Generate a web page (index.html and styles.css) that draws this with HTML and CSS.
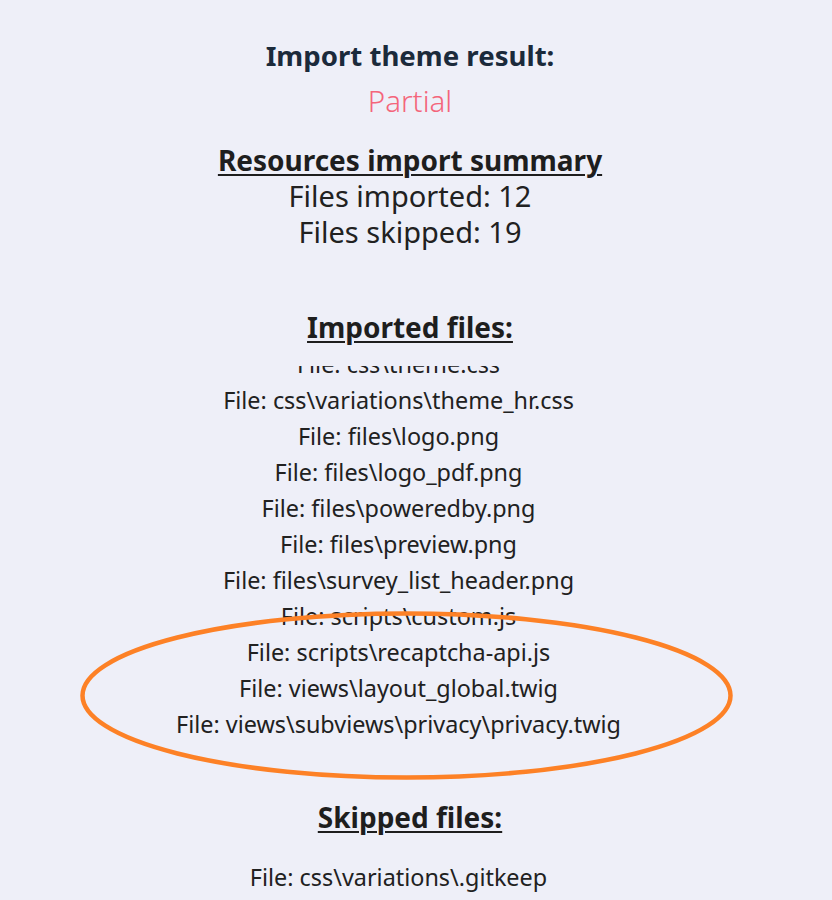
FILE: index.html
```html
<!DOCTYPE html>
<html lang="en">
<head>
<meta charset="utf-8">
<title>Import theme result</title>
<link rel="stylesheet" href="styles.css">
</head>
<body>
<main class="page">
  <h2 class="result-title">Import theme result:</h2>
  <p class="result-status">Partial</p>

  <h3 class="section-title">Resources import summary</h3>
  <p class="summary-line">Files imported: 12</p>
  <p class="summary-line">Files skipped: 19</p>

  <h3 class="section-title imported-title">Imported files:</h3>
  <div class="file-scroll">
    <ul class="file-list scrolled">
      <li>File: css\theme.css</li>
      <li>File: css\variations\theme_hr.css</li>
      <li>File: files\logo.png</li>
      <li>File: files\logo_pdf.png</li>
      <li>File: files\poweredby.png</li>
      <li>File: files\preview.png</li>
      <li>File: files\survey_list_header.png</li>
      <li>File: scripts\custom.js</li>
      <li>File: scripts\recaptcha-api.js</li>
      <li>File: views\layout_global.twig</li>
      <li>File: views\subviews\privacy\privacy.twig</li>
    </ul>
  </div>

  <h3 class="section-title skipped-title">Skipped files:</h3>
  <ul class="file-list skipped-list">
    <li>File: css\variations\.gitkeep</li>
  </ul>

  <svg class="annotation" width="832" height="900" viewBox="0 0 832 900" aria-hidden="true">
    <ellipse cx="406.5" cy="695.5" rx="324" ry="82" fill="none" stroke="#fd8126" stroke-width="4.5"/>
  </svg>
</main>
</body>
</html>
```
FILE: styles.css
```css
html, body {
  margin: 0;
  padding: 0;
  background: #eeeff8;
}
body {
  font-family: "Noto Sans", "Open Sans", sans-serif;
  color: #212121;
}
.page {
  position: relative;
  width: 832px;
  height: 900px;
  overflow: hidden;
  text-align: center;
  padding: 36px 12px 0 0;
  box-sizing: border-box;
}
.result-title {
  margin: 0;
  font-size: 27.6px;
  line-height: 38px;
  font-weight: 700;
  color: #1b2a3b;
}
.result-status {
  margin: 8px 0 0;
  font-size: 29.5px;
  line-height: 38px;
  font-weight: 300;
  color: #f4657b;
}
.section-title {
  margin: 22px 0 0;
  font-size: 28px;
  line-height: 36px;
  font-weight: 700;
  text-decoration: underline;
  text-decoration-thickness: 2px;
  text-underline-offset: 3px;
  color: #1e1e1e;
}
.summary-line {
  margin: 0;
  font-size: 29px;
  line-height: 36px;
  font-weight: 400;
  color: #212121;
}
.imported-title {
  margin-top: 59px;
}
.file-scroll {
  margin-top: 21px;
  height: 375px;
  overflow: hidden;
}
.file-list {
  list-style: none;
  margin: 0;
  padding: 0 23px 0 0;
  font-size: 23.4px;
  line-height: 36px;
  color: #212121;
}
.file-list.scrolled {
  margin-top: -20px;
}
.skipped-title {
  margin-top: 58px;
}
.skipped-list {
  margin-top: 24px;
}
.annotation {
  position: absolute;
  left: 0;
  top: 0;
  pointer-events: none;
}
```
